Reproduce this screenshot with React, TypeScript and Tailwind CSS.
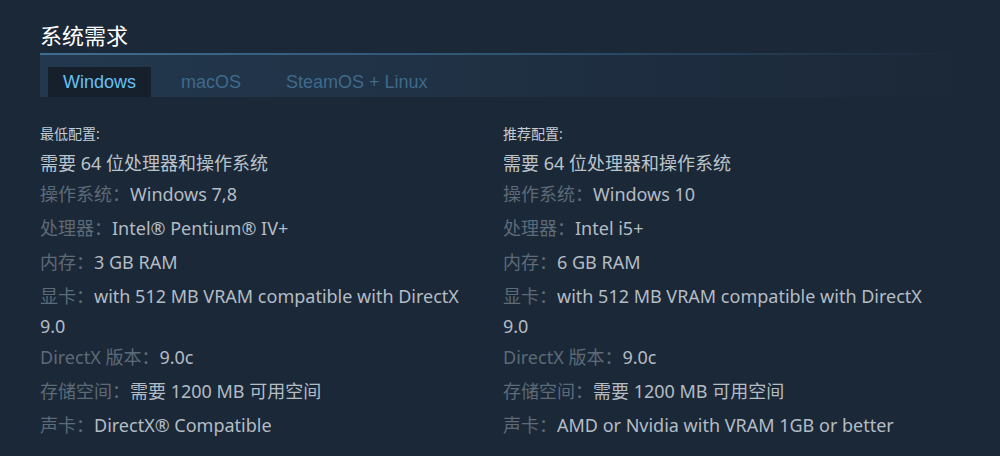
import React from "react";

type Row = { label?: string; value: string };

const minRows: Row[] = [
  { label: "操作系统：", value: "Windows 7,8" },
  { label: "处理器：", value: "Intel® Pentium® IV+" },
  { label: "内存：", value: "3 GB RAM" },
  { label: "显卡：", value: "with 512 MB VRAM compatible with DirectX 9.0" },
  { label: "DirectX 版本：", value: "9.0c" },
  { label: "存储空间：", value: "需要 1200 MB 可用空间" },
  { label: "声卡：", value: "DirectX® Compatible" },
];

const recRows: Row[] = [
  { label: "操作系统：", value: "Windows 10" },
  { label: "处理器：", value: "Intel i5+" },
  { label: "内存：", value: "6 GB RAM" },
  { label: "显卡：", value: "with 512 MB VRAM compatible with DirectX 9.0" },
  { label: "DirectX 版本：", value: "9.0c" },
  { label: "存储空间：", value: "需要 1200 MB 可用空间" },
  { label: "声卡：", value: "AMD or Nvidia with VRAM 1GB or better" },
];

function Column({ title, rows }: { title: string; rows: Row[] }) {
  return (
    <div className="w-[440px]">
      <div className="text-[14px] leading-[20px] text-[#c2cbd3]">{title}</div>
      <ul className="mt-[5px] text-[18px] leading-[27px] text-[#b4bcc4]">
        <li className="leading-[28px] text-[#bcc4cb]">需要 64 位处理器和操作系统</li>
        {rows.map((r, i) => (
          <li key={i}>
            <span className="leading-[34px] text-[#5d6a77]">{r.label}</span>
            <span>{r.value}</span>
          </li>
        ))}
      </ul>
    </div>
  );
}

export default function App() {
  return (
    <div
      className="min-h-[456px] w-full bg-[#1b2838] pl-[40px] pt-[20px]"
      style={{ fontFamily: '"Noto Sans", "Noto Sans CJK SC", sans-serif' }}
    >
      <div className="w-[926px]">
        <h2 className="mb-[3px] text-[22px] leading-[30px] text-white">系统需求</h2>
        <div className="h-[2px] bg-gradient-to-r from-[#3d6e90] via-[#2e5473] to-[#1b2838]" />
        <div
          className="flex h-[42px] items-end bg-gradient-to-r from-[#23384e] to-[#1b2838] pl-[8px]"
          style={{ fontFamily: '"Liberation Sans", Arial, sans-serif' }}
        >
          <div className="flex h-[30px] items-center bg-[#16202d] px-[15px] text-[18px] text-[#66c0f4]">
            Windows
          </div>
          <div className="ml-[15px] flex h-[30px] items-center px-[15px] text-[18px] text-[#3f6a8c]">
            macOS
          </div>
          <div className="ml-[15px] flex h-[30px] items-center px-[15px] text-[18px] text-[#3f6a8c]">
            SteamOS + Linux
          </div>
        </div>
        <div className="mt-[27px] grid grid-cols-[440px_440px] gap-x-[23px]">
          <Column title="最低配置:" rows={minRows} />
          <Column title="推荐配置:" rows={recRows} />
        </div>
      </div>
    </div>
  );
}
